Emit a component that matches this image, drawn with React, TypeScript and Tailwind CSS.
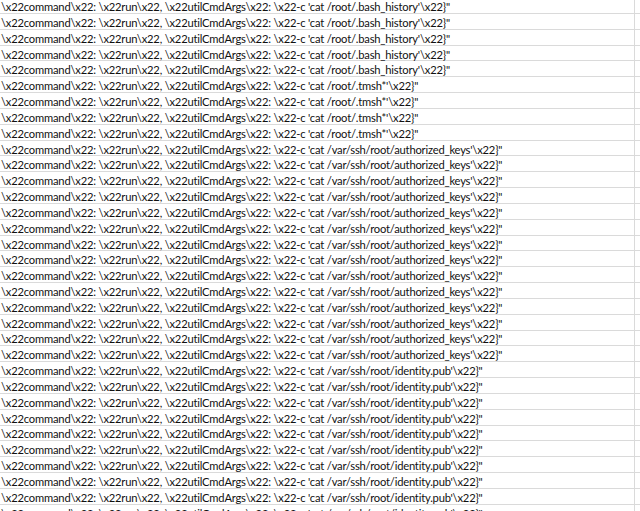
import React from 'react';

const paths: { path: string; count: number }[] = [
  { path: '/root/.bash_history', count: 5 },
  { path: '/root/.tmsh*', count: 4 },
  { path: '/var/ssh/root/authorized_keys', count: 14 },
  { path: '/var/ssh/root/identity.pub', count: 10 },
];

const rows = paths.flatMap((p) => Array.from({ length: p.count }, () => p.path));

const App = () => {
  return (
    <div className="w-[640px] h-[511px] overflow-hidden bg-white text-[#111] font-['Lato','Liberation_Sans',sans-serif] text-[11.2px] tracking-[-0.2px]">
      <div className="-mt-[1.84px]">
        {rows.map((path, i) => (
          <div key={i} className="flex h-[15.84px] border-b border-[#dadada]">
            <div className="w-[635px] shrink-0 border-r border-[#dadada] flex items-center pl-[1px] whitespace-nowrap overflow-visible leading-[15px] pt-[2px]">
              {`\\x22command\\x22: \\x22run\\x22, \\x22utilCmdArgs\\x22: \\x22-c 'cat ${path}'\\x22}"`}
            </div>
            <div className="flex-1" />
          </div>
        ))}
      </div>
    </div>
  );
};

export default App;
